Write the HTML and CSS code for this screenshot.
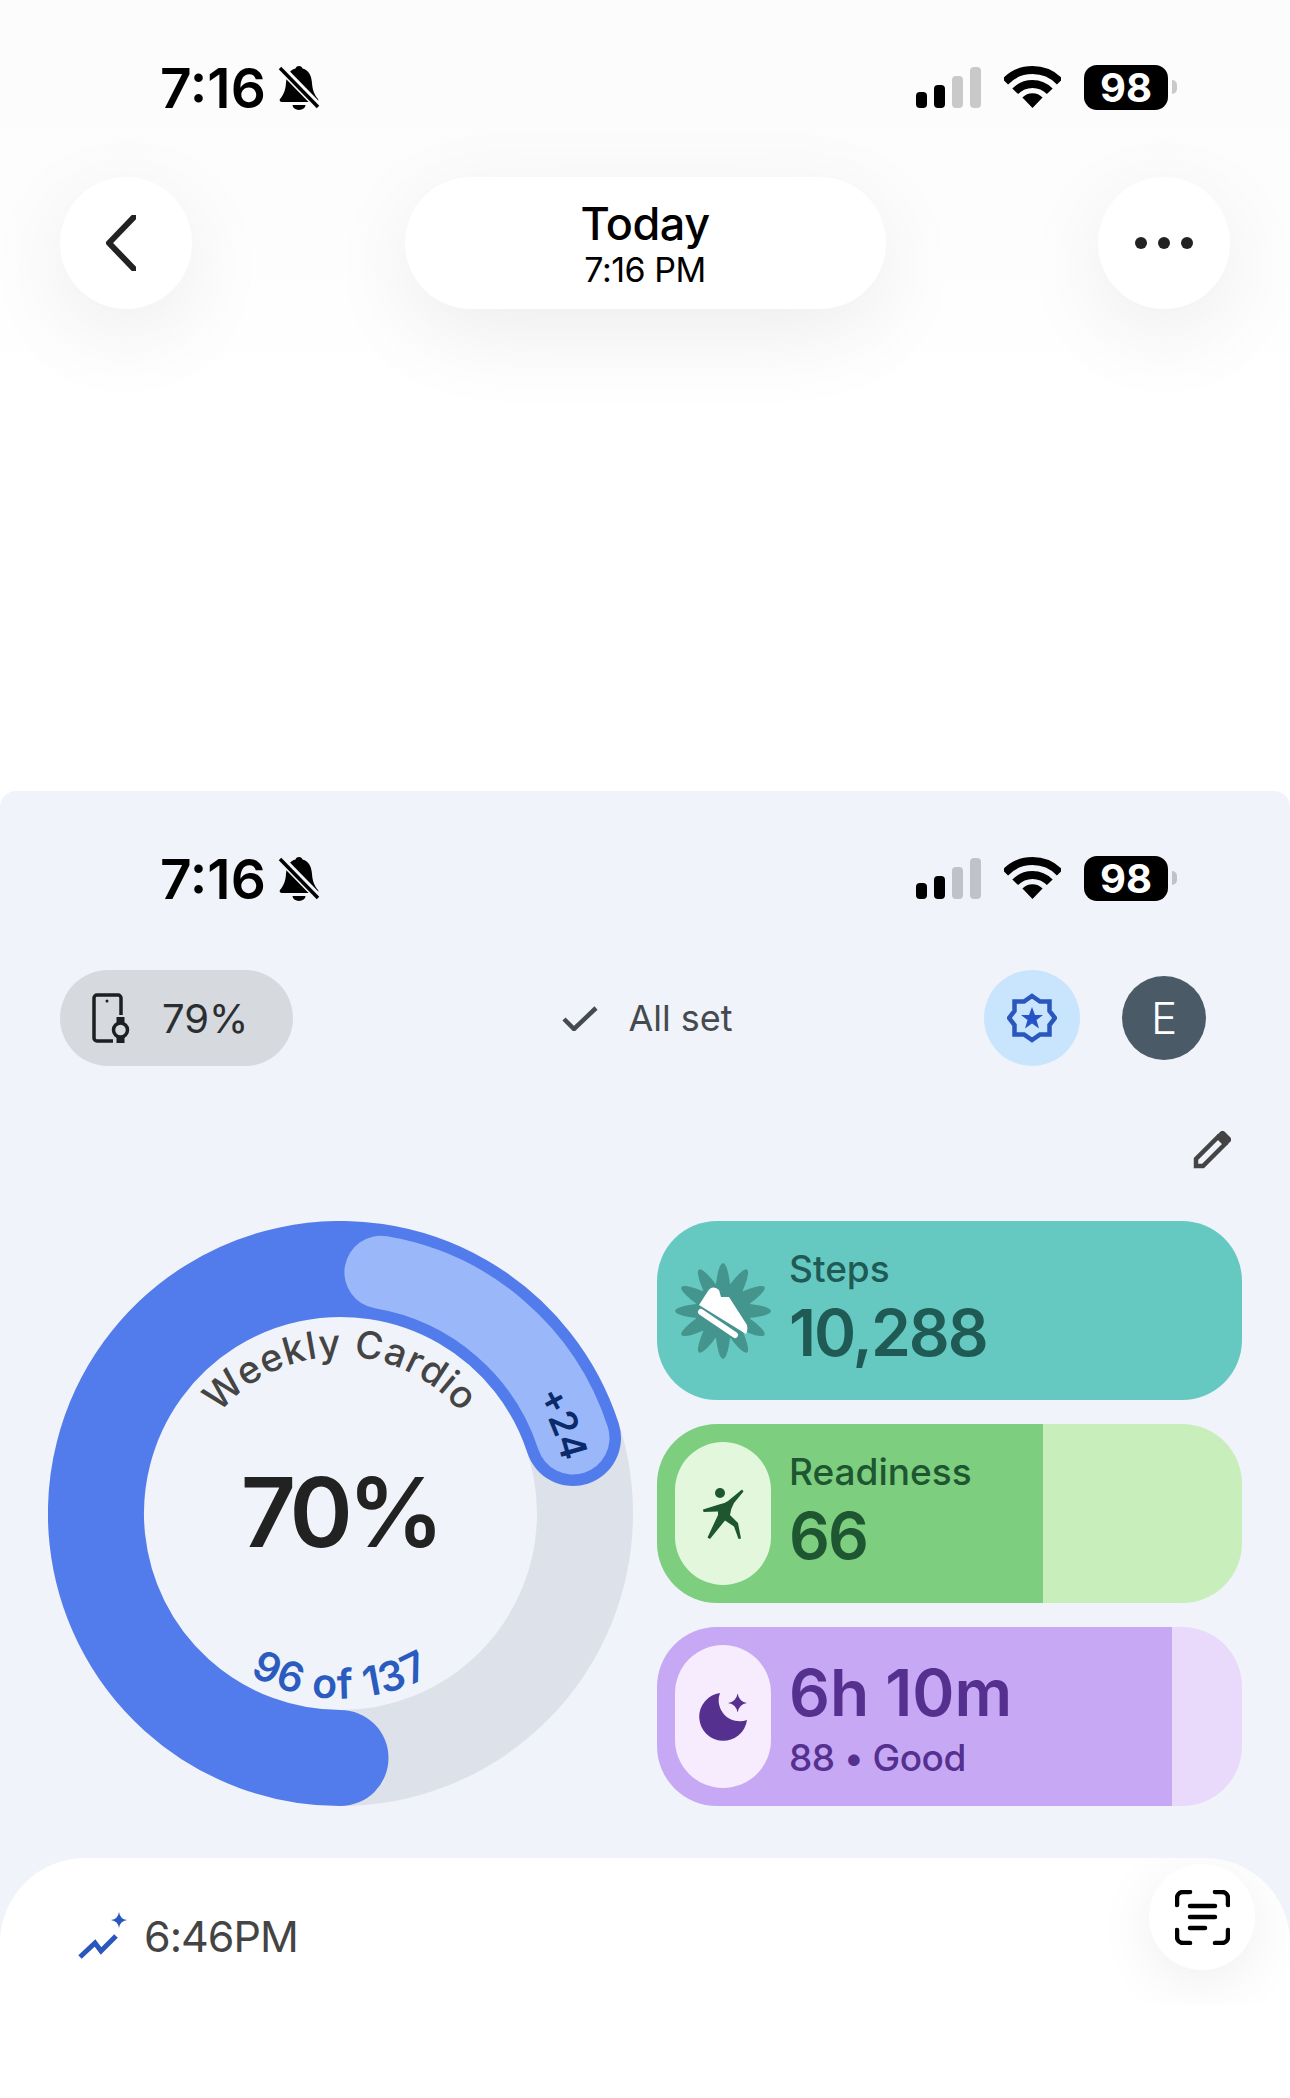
FILE: index.html
```html
<!DOCTYPE html>
<html lang="en">
<head>
    <meta charset="UTF-8">
    <title>Today</title>
    <link rel="stylesheet" href="styles.css">
</head>
<body>
    <!-- top screen: header over the timeline -->
    <section class="top">
        <div class="status">
            <div class="status-left">
                <span class="clock">7:16</span>
                <svg class="bell" viewBox="0 0 42 45"><path d="M21 1c-2 0-3 1-3.5 2.5C11 5 8.500 11 8 18c-.5 7-2 11-6 16-1 1.500 0 3 2 3h34c2 0 3-1.500 2-3-4-5-5.500-9-6-16-.5-7-3-13-9.500-14.500C24 2 23 1 21 1z"/><path d="M14.500 40h13a6.500 5 0 0 1-13 0z"/><path class="bell-gap" d="M0 0l42 43"/><path class="bell-slash" d="M2 3l38 39"/></svg>
            </div>
            <div class="status-right">
                <svg class="signal" viewBox="0 0 65 41"><rect y="25" width="11" height="16" rx="4"/><rect x="18" y="18" width="11" height="23" rx="4"/><rect class="off" x="36" y="9" width="11" height="32" rx="4"/><rect class="off" x="54" width="11" height="41" rx="4"/></svg>
                <svg class="wifi" viewBox="0 0 57 42"><path class="wifi-arc" d="M1.200 15.600A38 38 0 0 1 55.800 15.600"/><path class="wifi-arc" d="M11.200 25.300A24 24 0 0 1 45.800 25.300"/><path d="M28.500 42L18.400 31.500A14 14 0 0 1 38.600 31.500z"/></svg>
                <div class="battery"><span class="battery-num">98</span><span class="battery-nub"></span></div>
            </div>
        </div>
        <div class="nav">
            <button class="nav-round">
                <svg class="chevron" viewBox="0 0 30 56"><path d="M28 2L3 28l25 26"/></svg>
            </button>
            <div class="nav-title">
                <div class="nav-today">Today</div>
                <div class="nav-time">7:16 PM</div>
            </div>
            <button class="nav-round nav-more"><i></i><i></i><i></i></button>
        </div>
    </section>

    <!-- second screen: daily summary -->
    <section class="panel">
        <div class="status">
            <div class="status-left">
                <span class="clock">7:16</span>
                <svg class="bell" viewBox="0 0 42 45"><path d="M21 1c-2 0-3 1-3.5 2.5C11 5 8.500 11 8 18c-.5 7-2 11-6 16-1 1.500 0 3 2 3h34c2 0 3-1.500 2-3-4-5-5.500-9-6-16-.5-7-3-13-9.500-14.500C24 2 23 1 21 1z"/><path d="M14.500 40h13a6.500 5 0 0 1-13 0z"/><path class="bell-gap" d="M0 0l42 43"/><path class="bell-slash" d="M2 3l38 39"/></svg>
            </div>
            <div class="status-right">
                <svg class="signal" viewBox="0 0 65 41"><rect y="25" width="11" height="16" rx="4"/><rect x="18" y="18" width="11" height="23" rx="4"/><rect class="off" x="36" y="9" width="11" height="32" rx="4"/><rect class="off" x="54" width="11" height="41" rx="4"/></svg>
                <svg class="wifi" viewBox="0 0 57 42"><path class="wifi-arc" d="M1.200 15.600A38 38 0 0 1 55.800 15.600"/><path class="wifi-arc" d="M11.200 25.300A24 24 0 0 1 45.800 25.300"/><path d="M28.500 42L18.400 31.500A14 14 0 0 1 38.600 31.500z"/></svg>
                <div class="battery"><span class="battery-num">98</span><span class="battery-nub"></span></div>
            </div>
        </div>

        <div class="toolbar">
            <div class="chip">
                <svg class="chip-icon" viewBox="0 0 38 50"><path d="M21 48H5a3 3 0 0 1-3-3V5a3 3 0 0 1 3-3h21a3 3 0 0 1 3 3v17"/><circle class="chip-fill" cx="15" cy="8" r="1.500"/><circle cx="28.500" cy="37" r="7"/><rect class="chip-fill" x="24.500" y="24" width="8" height="6"/><rect class="chip-fill" x="24.500" y="44" width="8" height="6"/></svg>
                <span>79%</span>
            </div>
            <div class="synced">
                <svg class="check" viewBox="0 0 36 25"><path d="M2 13l10 10L34 2"/></svg>
                <span>All set</span>
            </div>
            <div class="toolbar-right">
                <div class="badge">
                    <svg class="badge-star" viewBox="0 0 50 50"><path class="badge-outline" d="M25 3l8 5.500h9.500V18l5.500 7-5.500 7v9.500H33L25 47l-8-5.500H7.500V32L2 25l5.500-7V8.500H17z"/><path d="M25 14l3 8h8l-6.500 5 2.500 8.500-7-5-7 5 2.500-8.500L14 22h8z"/></svg>
                </div>
                <div class="avatar">E</div>
            </div>
        </div>

        <div class="edit-row">
            <svg class="pencil" viewBox="0 0 38 38"><path class="pencil-line" d="M3 35v-7L25 6l7 7-22 22z"/><path d="M24 4l3-3a3.500 3.500 0 0 1 5 0l5 5a3.500 3.500 0 0 1 0 5l-3 3z"/></svg>
        </div>

        <div class="main">
            <svg class="ring" viewBox="0 0 585 585">
                <circle class="ring-track" cx="292.500" cy="292.500" r="244.500"/>
                <path class="ring-value" d="M292.500 537A244.500 244.500 0 1 1 525 217"/>
                <path class="ring-extra" d="M332.900 51.300A244.500 244.500 0 0 1 525 217"/>
                <path id="arc-top" class="ring-guide" d="M135.500 292.500A157 157 0 0 1 449.500 292.500"/>
                <path id="arc-bottom" class="ring-guide" d="M107.500 292.500A185 185 0 0 0 477.500 292.500"/>
                <path id="arc-extra" class="ring-guide" d="M432.900 112.800A228 228 0 0 1 518.300 324.200"/>
                <text class="ring-title"><textPath href="#arc-top" startOffset="50%">Weekly Cardio</textPath></text>
                <text class="ring-count"><textPath href="#arc-bottom" startOffset="50%">96 of 137</textPath></text>
                <text class="ring-plus"><textPath href="#arc-extra" startOffset="50%">+24</textPath></text>
                <text class="ring-percent" x="292" y="326">70%</text>
            </svg>

            <div class="cards">
                <div class="card card-steps">
                    <div class="card-icon">
                        <svg class="flower" viewBox="0 0 96 96">
                            <g class="petals">
                                <ellipse cx="48" cy="48" rx="8.500" ry="48"/>
                                <ellipse cx="48" cy="48" rx="8.500" ry="48" transform="rotate(30 48 48)"/>
                                <ellipse cx="48" cy="48" rx="8.500" ry="48" transform="rotate(60 48 48)"/>
                                <ellipse cx="48" cy="48" rx="8.500" ry="48" transform="rotate(90 48 48)"/>
                                <ellipse cx="48" cy="48" rx="8.500" ry="48" transform="rotate(120 48 48)"/>
                                <ellipse cx="48" cy="48" rx="8.500" ry="48" transform="rotate(150 48 48)"/>
                                <circle cx="48" cy="48" r="28"/>
                            </g>
                            <path class="shoe" d="M24 42L33 28Q36 23 41 25L44 27L46 34L54 34L72 62Q73 68 71 71z"/>
                            <path class="shoe-sole" d="M26 49l34 23"/>
                        </svg>
                    </div>
                    <div class="card-text">
                        <div class="card-label">Steps</div>
                        <div class="card-value">10,288</div>
                    </div>
                </div>
                <div class="card card-ready">
                    <div class="card-icon">
                        <svg class="runner" viewBox="0 0 42 52">
                            <circle cx="18" cy="5" r="5"/>
                            <path d="M1 21.500L17 16.500Q22 16 26 13L40 1.500L41.500 3.500L32 15Q29 20 28 27L36 35L39 50.500L36.500 51L32 38.500L23 32.500L8 51L5.500 49.500L16 27L16 23.500L1.500 24z"/>
                        </svg>
                    </div>
                    <div class="card-text">
                        <div class="card-label">Readiness</div>
                        <div class="card-value">66</div>
                    </div>
                </div>
                <div class="card card-sleep">
                    <div class="card-icon">
                        <svg class="moon" viewBox="0 0 48 48">
                            <path d="M21 0A24 24 0 1 0 48 27A21 21 0 0 1 21 0z"/>
                            <path d="M38.600.5Q40 8.600 48 10Q40 11.400 38.600 19.500Q37.200 11.400 29 10Q37.200 8.600 38.600.5z"/>
                        </svg>
                    </div>
                    <div class="card-text">
                        <div class="card-value">6h 10m</div>
                        <div class="card-label">88 • Good</div>
                    </div>
                </div>
            </div>
        </div>

        <div class="sheet">
            <div class="sheet-head">
                <svg class="trend" viewBox="0 0 50 47">
                    <path class="trend-line" d="M2 45l15-14 6 8 15-15"/>
                    <path d="M41 0q1 7 8 8q-7 1-8 8q-1-7-8-8q7-1 8-8z"/>
                </svg>
                <span class="sheet-time">6:46PM</span>
                <button class="scan">
                    <svg class="scan-icon" viewBox="0 0 55 55"><path class="scan-line" d="M2 15V8a6 6 0 0 1 6-6h7M40 2h7a6 6 0 0 1 6 6v7M2 40v7a6 6 0 0 0 6 6h7M53 40v7a6 6 0 0 1-6 6h-7M15 16h25M15 27h25M15 38h15"/></svg>
                </button>
            </div>
        </div>
    </section>
</body>
</html>
```

FILE: styles.css
```css
* {
    box-sizing: border-box;
}
body {
    margin: 0;
    width: 1290px;
    height: 2098px;
    overflow: hidden;
    background: #fff;
    font-family: 'Inter', sans-serif;
    color: #000;
}
button {
    border: none;
    padding: 0;
    background: none;
}

/* status bar, used on both screens */
.status {
    display: flex;
    justify-content: space-between;
    align-items: center;
    height: 46px;
    margin-top: 64px;
    padding: 0 122px 0 160px;
}
.status-left,
.status-right {
    display: flex;
    align-items: center;
}
.clock {
    padding-top: 2px;
    font-size: 55px;
    font-weight: 600;
    line-height: 46px;
}
.bell {
    width: 42px;
    height: 45px;
    margin-left: 12px;
}
.bell-gap {
    fill: none;
    stroke: #fcfcfc;
    stroke-width: 8;
}
.bell-slash {
    fill: none;
    stroke: #000;
    stroke-width: 3.500;
}
.signal {
    width: 65px;
    height: 41px;
    margin-top: 1px;
}
.off {
    fill: rgba(0, 0, 0, 0.2);
}
.wifi {
    width: 57px;
    height: 42px;
    margin-left: 23px;
}
.wifi-arc {
    fill: none;
    stroke: #000;
    stroke-width: 8;
}
.battery {
    display: flex;
    align-items: center;
    justify-content: center;
    width: 84px;
    height: 45px;
    margin-left: 23px;
    background: #000;
    border-radius: 13px;
    position: relative;
}
.battery-num {
    color: #fff;
    font-size: 40px;
    font-weight: 700;
}
.battery-nub {
    position: absolute;
    top: 15px;
    right: -9px;
    width: 5px;
    height: 14px;
    background: rgba(0, 0, 0, 0.2);
    border-radius: 0 6px 6px 0;
}

/* top screen */
.top {
    display: flow-root;
    height: 791px;
    background: linear-gradient(#fcfcfc 0, #fcfcfc 120px, #fff 420px);
}
.nav {
    display: flex;
    justify-content: space-between;
    margin-top: 67px;
    padding: 0 60px;
}
.nav-round,
.nav-title {
    height: 132px;
    background: #fff;
    box-shadow: 0 24px 90px rgba(0, 0, 0, 0.07);
}
.nav-round {
    display: flex;
    align-items: center;
    justify-content: center;
    width: 132px;
    border-radius: 50%;
}
.chevron {
    width: 30px;
    height: 56px;
    margin-right: 10px;
}
.chevron path {
    fill: none;
    stroke: #222;
    stroke-width: 6;
    stroke-linecap: round;
    stroke-linejoin: round;
}
.nav-more {
    gap: 11px;
}
.nav-more i {
    width: 12px;
    height: 12px;
    background: #222;
    border-radius: 50%;
}
.nav-title {
    display: flex;
    flex-direction: column;
    align-items: center;
    justify-content: center;
    width: 481px;
    padding-top: 3px;
    border-radius: 66px;
}
.nav-today {
    font-size: 45px;
    font-weight: 500;
    line-height: 50px;
    letter-spacing: -0.5px;
}
.nav-time {
    font-size: 34px;
    line-height: 42px;
    letter-spacing: -0.5px;
}

/* summary screen */
.panel {
    display: flow-root;
    height: 1307px;
    background: #f0f3f9;
    border-radius: 16px 16px 0 0;
    overflow: hidden;
}
.panel .bell-gap {
    stroke: #f0f3f9;
}
.toolbar {
    display: flex;
    justify-content: space-between;
    align-items: center;
    height: 96px;
    margin-top: 69px;
    padding: 0 84px 0 60px;
}
.chip {
    display: flex;
    align-items: center;
    gap: 32px;
    width: 233px;
    height: 96px;
    padding-left: 32px;
    background: #d6d9de;
    border-radius: 48px;
    font-size: 40px;
    color: #2b2e30;
}
.chip-icon {
    width: 38px;
    height: 50px;
    fill: none;
    stroke: #1d1f20;
    stroke-width: 3.500;
}
.chip-fill {
    fill: #1d1f20;
    stroke: none;
}
.synced {
    display: flex;
    align-items: center;
    gap: 30px;
    margin-left: 18px;
    font-size: 36px;
    color: #444a4e;
}
.check {
    width: 36px;
    height: 25px;
}
.check path {
    fill: none;
    stroke: #444a4e;
    stroke-width: 4.500;
}
.toolbar-right {
    display: flex;
    align-items: center;
    gap: 42px;
}
.badge {
    display: flex;
    align-items: center;
    justify-content: center;
    width: 96px;
    height: 96px;
    background: #c9e4fd;
    border-radius: 50%;
}
.badge-star {
    width: 50px;
    height: 50px;
    fill: #2654c8;
}
.badge-outline {
    fill: none;
    stroke: #2957bd;
    stroke-width: 4.500;
}
.avatar {
    display: flex;
    align-items: center;
    justify-content: center;
    width: 84px;
    height: 84px;
    background: #4a5a66;
    border-radius: 50%;
    color: #fff;
    font-size: 44px;
    font-weight: 300;
}
.edit-row {
    display: flex;
    justify-content: flex-end;
    height: 38px;
    margin-top: 65px;
    padding-right: 59px;
}
.pencil {
    width: 38px;
    height: 38px;
    fill: #444;
}
.pencil-line {
    fill: none;
    stroke: #444;
    stroke-width: 4.500;
}

.main {
    display: flex;
    gap: 24px;
    height: 585px;
    margin-top: 52px;
    padding-left: 48px;
}
.ring {
    flex: none;
    width: 585px;
    height: 585px;
}
.ring-track,
.ring-value,
.ring-extra,
.ring-guide {
    fill: none;
}
.ring-track {
    stroke: #dde1ea;
    stroke-width: 96;
}
.ring-value {
    stroke: #527ceb;
    stroke-width: 96;
    stroke-linecap: round;
}
.ring-extra {
    stroke: #9ab8f9;
    stroke-width: 73;
    stroke-linecap: round;
}
.ring-title,
.ring-count,
.ring-plus {
    text-anchor: middle;
}
.ring-title {
    fill: #444;
    font-size: 38px;
    font-weight: 500;
    letter-spacing: 1px;
}
.ring-count {
    fill: #2a5bbf;
    font-size: 41px;
    font-weight: 600;
    letter-spacing: 1px;
}
.ring-plus {
    fill: #0a2a6b;
    font-size: 37px;
    font-weight: 600;
}
.ring-percent {
    fill: #222;
    font-size: 96px;
    font-weight: 600;
    text-anchor: middle;
    letter-spacing: -5px;
}

.cards {
    display: flex;
    flex-direction: column;
    gap: 24px;
    width: 585px;
}
.card {
    display: flex;
    align-items: center;
    gap: 18px;
    height: 179px;
    padding: 18px;
    border-radius: 60px;
}
.card-steps {
    background: #66c9c1;
    color: #1f5a55;
}
.card-ready {
    background: linear-gradient(90deg, #7dce7e 66%, #c8eebb 66%);
    color: #1e5632;
}
.card-sleep {
    background: linear-gradient(90deg, #c6a8f5 88%, #e9d9fb 88%);
    color: #55308f;
}
.card-icon {
    display: flex;
    align-items: center;
    justify-content: center;
    flex: none;
    width: 96px;
    height: 143px;
    border-radius: 48px;
}
.card-ready .card-icon {
    background: #e3f7dc;
}
.card-sleep .card-icon {
    background: #f6ecfd;
}
.card-text {
    padding-bottom: 6px;
}
.card-sleep .card-text {
    padding: 4px 0 0;
}
.card-label {
    font-size: 37px;
    font-weight: 500;
    line-height: 44px;
}
.card-value {
    margin-top: 6px;
    font-size: 64px;
    font-weight: 600;
    line-height: 72px;
    letter-spacing: -2px;
}
.card-sleep .card-value {
    margin-top: 0;
    letter-spacing: 0;
}
.card-sleep .card-label {
    margin-top: 7px;
    letter-spacing: -0.5px;
}
.flower {
    width: 96px;
    height: 96px;
}
.petals {
    fill: #45958f;
}
.shoe {
    fill: #fff;
}
.shoe-sole {
    stroke: #fff;
    stroke-width: 6;
    stroke-linecap: round;
}
.runner {
    width: 42px;
    height: 52px;
    fill: #1e5632;
}
.moon {
    width: 48px;
    height: 48px;
    fill: #55308f;
}

/* bottom sheet */
.sheet {
    height: 240px;
    margin-top: 52px;
    background: #fff;
    border-radius: 85px 85px 0 0;
    overflow: hidden;
}
.sheet-head {
    display: flex;
    align-items: flex-start;
    height: 147px;
    overflow: hidden;
    padding: 6px 35px 0 78px;
}
.trend {
    flex: none;
    width: 50px;
    height: 47px;
    margin-top: 48px;
    fill: #2957bd;
}
.trend-line {
    fill: none;
    stroke: #2957bd;
    stroke-width: 5;
}
.sheet-time {
    margin: 48px 0 0 16px;
    font-size: 43px;
    line-height: 48px;
    color: #444;
    letter-spacing: -1px;
}
.scan {
    display: flex;
    align-items: center;
    justify-content: center;
    width: 106px;
    height: 106px;
    margin-left: auto;
    background: #fff;
    border-radius: 50%;
    box-shadow: 0 12px 60px rgba(0, 0, 0, 0.07);
}
.scan-icon {
    width: 55px;
    height: 55px;
}
.scan-line {
    fill: none;
    stroke: #000;
    stroke-width: 4.500;
    stroke-linecap: round;
}
```
